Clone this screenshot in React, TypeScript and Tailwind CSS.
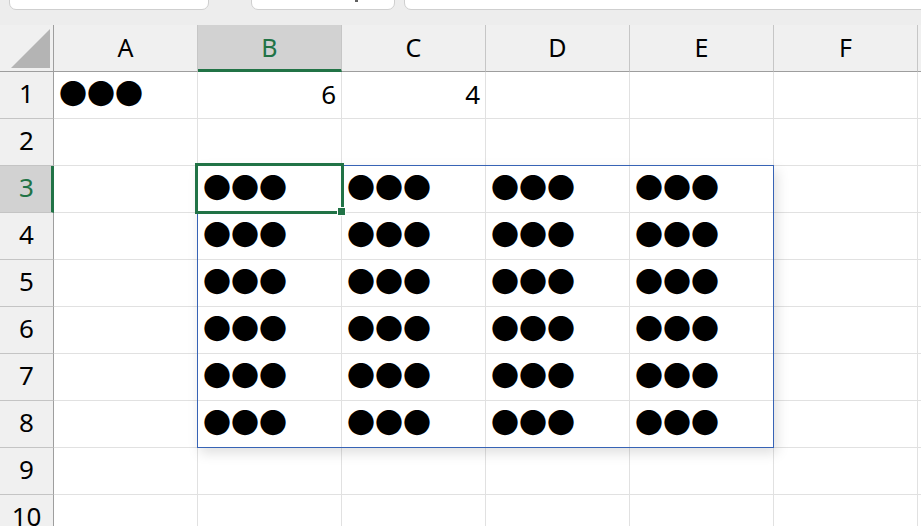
import React from 'react';

const columns = ['A', 'B', 'C', 'D', 'E', 'F'];
const rows = [1, 2, 3, 4, 5, 6, 7, 8, 9, 10];
const DOTS = '●●●';

type Cell = { text: string; align: 'left' | 'right' };

function getCell(row: number, col: string): Cell | null {
  if (row === 1 && col === 'A') return { text: DOTS, align: 'left' };
  if (row === 1 && col === 'B') return { text: '6', align: 'right' };
  if (row === 1 && col === 'C') return { text: '4', align: 'right' };
  if (row >= 3 && row <= 8 && ['B', 'C', 'D', 'E'].includes(col)) return { text: DOTS, align: 'left' };
  return null;
}

function CellText({ cell }: { cell: Cell }) {
  if (cell.text === DOTS) {
    return (
      <span className="pl-[5px] pb-[4px] text-[28px] leading-none text-black font-['Noto_Sans_CJK_JP',sans-serif]">
        {cell.text}
      </span>
    );
  }
  return (
    <span className="w-full pr-[5px] pb-[3px] text-right text-[26px] leading-none text-black font-['Noto_Sans',sans-serif]">
      {cell.text}
    </span>
  );
}

export default function App() {
  return (
    <div className="relative w-[921px] h-[526px] overflow-hidden bg-white font-['Noto_Sans',sans-serif]">
      {/* formula bar strip */}
      <div className="relative h-[25px] bg-[#ededed]">
        <div className="absolute left-[9px] top-[-8px] w-[200px] h-[18px] rounded-b-[7px] bg-white border border-[#cfcfcf]" />
        <div className="absolute left-[251px] top-[-8px] w-[144px] h-[18px] rounded-b-[7px] bg-white border border-[#cfcfcf]">
          <div className="absolute right-[36px] top-[7px] w-[3px] h-[2px] bg-[#606060]" />
        </div>
        <div className="absolute left-[404px] top-[-8px] w-[540px] h-[18px] rounded-b-[7px] bg-white border border-[#cfcfcf]" />
      </div>

      {/* column headers */}
      <div className="flex h-[47px]">
        <div className="relative w-[54px] shrink-0 bg-[#f0f0f0] border-r border-b border-[#9e9e9e]">
          <svg width="54" height="46" className="absolute left-0 top-0">
            <polygon points="11,43 50,4 50,43" fill="#b4b4b4" />
          </svg>
        </div>
        {columns.map((c) => {
          const active = c === 'B';
          return (
            <div
              key={c}
              className={
                active
                  ? 'w-[144px] shrink-0 flex items-center justify-center bg-[#d2d2d2] border-r border-[#c6c6c6] border-b-[3px] border-b-[#217346] text-[#217346] text-[25px]'
                  : 'w-[144px] shrink-0 flex items-center justify-center bg-[#f0f0f0] border-r border-[#c6c6c6] border-b border-b-[#9e9e9e] text-black text-[25px]'
              }
            >
              <span className={active ? 'pt-[2px]' : ''}>{c}</span>
            </div>
          );
        })}
        <div className="flex-1 bg-[#f0f0f0] border-b border-[#9e9e9e]" />
      </div>

      {/* rows */}
      {rows.map((r) => {
        const active = r === 3;
        return (
          <div key={r} className="flex h-[47px]">
            <div
              className={
                active
                  ? 'w-[54px] shrink-0 flex items-center justify-center bg-[#d2d2d2] border-b border-[#c4c4c4] border-r-[3px] border-r-[#217346] text-[#217346] text-[26px]'
                  : 'w-[54px] shrink-0 flex items-center justify-center bg-[#f0f0f0] border-b border-[#c4c4c4] border-r border-r-[#9e9e9e] text-black text-[26px]'
              }
            >
              <span className={active ? 'pl-[2px] pb-[3px]' : 'pb-[3px]'}>{r}</span>
            </div>
            {columns.map((c) => {
              const cell = getCell(r, c);
              return (
                <div key={c} className="w-[144px] shrink-0 flex items-center border-r border-b border-[#e1e1e1]">
                  {cell && <CellText cell={cell} />}
                </div>
              );
            })}
            <div className="flex-1 border-b border-[#e1e1e1]" />
          </div>
        );
      })}

      {/* spill range outline */}
      <div className="absolute left-[197px] top-[165px] w-[577px] h-[283px] border border-[#3763b5] shadow-[3px_5px_12px_rgba(0,0,0,0.13)] pointer-events-none" />

      {/* active cell */}
      <div className="absolute left-[195px] top-[163px] w-[149px] h-[51px] border-[3px] border-[#217346] pointer-events-none" />
      <div className="absolute left-[337px] top-[207px] w-[9px] h-[9px] bg-[#217346] border border-white" />
    </div>
  );
}
